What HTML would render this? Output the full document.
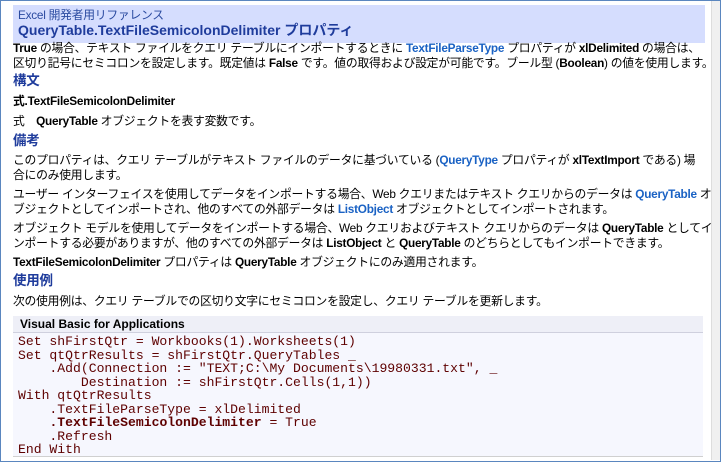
<!DOCTYPE html>
<html><head><meta charset="utf-8"><style>
html,body{margin:0;padding:0;}
body{width:721px;height:462px;overflow:hidden;background:#fff;position:relative;font-family:"Liberation Sans","Noto Sans CJK JP",sans-serif;font-size:11.8px;color:#000;}
.frame{position:absolute;left:0;top:0;width:719px;height:460px;border:1px solid #5a86bf;}
.sb{position:absolute;left:711px;top:1px;width:8px;height:459px;background:#f0f0f0;border-left:1px solid #ddd;}
.hdr{position:absolute;left:13px;top:5px;width:692px;height:38px;background:#d5ddfe;}
.t{position:absolute;left:13px;white-space:nowrap;line-height:15px;letter-spacing:-0.25px;}
.l{color:#1a62c4;font-weight:bold;}
b{font-weight:bold;}
.h{color:#1f3c9c;font-weight:bold;font-size:13.5px;}
.cbox{position:absolute;left:13px;top:316px;width:690px;height:141px;background:#f6f7fe;}
.chead{position:absolute;left:0;top:0;width:690px;height:16px;background:#eeeff7;border-bottom:1px solid #cfd0de;font-weight:bold;font-size:12px;line-height:16px;}
.chead span{padding-left:7px;}
pre{position:absolute;left:5px;top:19px;margin:0;font-family:"Liberation Mono",monospace;font-size:13.1px;line-height:13.5px;color:#5e0000;}
.cbot{position:absolute;left:0;top:140px;width:690px;height:1px;background:#d0d0d0;}
</style></head><body>
<div class="frame"></div>
<div class="sb"></div>
<div class="hdr"></div>
<div class="t" style="top:8px;left:18px;color:#2a4aa0;">Excel 開発者用リファレンス</div>
<div class="t" style="top:23px;left:18px;color:#1f3c9c;font-weight:bold;font-size:14px;letter-spacing:0;">QueryTable.TextFileSemicolonDelimiter プロパティ</div>
<div class="t" style="top:41px;"><b>True</b> の場合、テキスト ファイルをクエリ テーブルにインポートするときに <span class="l">TextFileParseType</span> プロパティが <b>xlDelimited</b> の場合は、<br>区切り記号にセミコロンを設定します。既定値は <b>False</b> です。値の取得および設定が可能です。ブール型 (<b>Boolean</b>) の値を使用します。</div>
<div class="t h" style="top:73px;">構文</div>
<div class="t" style="top:94px;"><b>式.TextFileSemicolonDelimiter</b></div>
<div class="t" style="top:114px;">式　<b>QueryTable</b> オブジェクトを表す変数です。</div>
<div class="t h" style="top:133px;">備考</div>
<div class="t" style="top:153px;">このプロパティは、クエリ テーブルがテキスト ファイルのデータに基づいている (<span class="l">QueryType</span> プロパティが <b>xlTextImport</b> である) 場<br>合にのみ使用します。</div>
<div class="t" style="top:187px;">ユーザー インターフェイスを使用してデータをインポートする場合、Web クエリまたはテキスト クエリからのデータは <span class="l">QueryTable</span> オ<br>ブジェクトとしてインポートされ、他のすべての外部データは <span class="l">ListObject</span> オブジェクトとしてインポートされます。</div>
<div class="t" style="top:221px;">オブジェクト モデルを使用してデータをインポートする場合、Web クエリおよびテキスト クエリからのデータは <b>QueryTable</b> としてイ<br>ンポートする必要がありますが、他のすべての外部データは <b>ListObject</b> と <b>QueryTable</b> のどちらとしてもインポートできます。</div>
<div class="t" style="top:255px;"><b>TextFileSemicolonDelimiter</b> プロパティは <b>QueryTable</b> オブジェクトにのみ適用されます。</div>
<div class="t h" style="top:273px;">使用例</div>
<div class="t" style="top:294px;">次の使用例は、クエリ テーブルでの区切り文字にセミコロンを設定し、クエリ テーブルを更新します。</div>
<div class="cbox">
<div class="chead"><span>Visual Basic for Applications</span></div>
<pre>Set shFirstQtr = Workbooks(1).Worksheets(1)
Set qtQtrResults = shFirstQtr.QueryTables _
    .Add(Connection := "TEXT;C:\My Documents\19980331.txt", _
        Destination := shFirstQtr.Cells(1,1))
With qtQtrResults
    .TextFileParseType = xlDelimited
    <b>.TextFileSemicolonDelimiter</b> = True
    .Refresh
End With</pre>
<div class="cbot"></div>
</div>
</body></html>
